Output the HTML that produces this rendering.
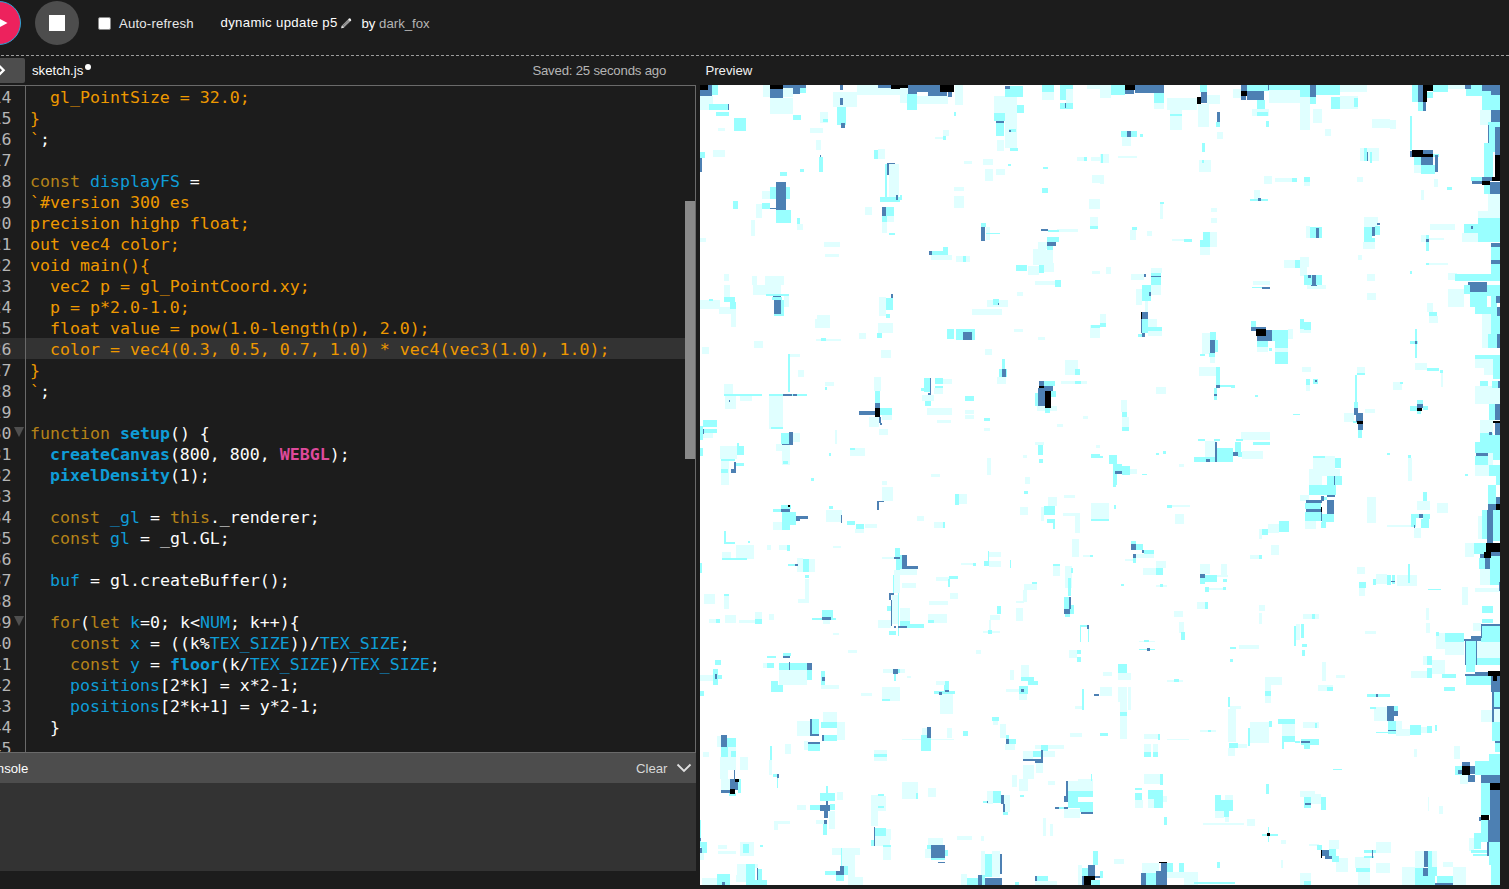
<!DOCTYPE html>
<html><head><meta charset="utf-8"><title>p5.js Web Editor</title>
<style>
*{box-sizing:border-box;margin:0;padding:0}
html,body{width:1509px;height:889px;overflow:hidden;background:#1c1c1c;color:#fdfdfd;font-family:"Liberation Sans",sans-serif}
.abs{position:absolute}
#play{left:-23px;top:1px;width:44px;height:44px;border-radius:50%;background:#ed225d;border:1px solid #2ea3d6}
#stop{left:35px;top:1px;width:44px;height:44px;border-radius:50%;background:#4d4d4d}
#stop i{position:absolute;left:14px;top:14px;width:16px;height:16px;background:#fff}
#chk{left:98px;top:17px;width:13px;height:13px;background:#fff;border:1px solid #8a8a8a;border-radius:2px}
.ui{font-size:13.2px;white-space:nowrap;line-height:16px}
#dash{left:0;top:55px;width:1509px;height:1px;background:repeating-linear-gradient(90deg,transparent 0,transparent 1px,#9c9c9c 1px,#9c9c9c 4px,transparent 4px,transparent 5px)}
#toggle{left:0;top:58px;width:25px;height:25px;background:#4d4d4d;border-radius:0 2px 2px 0}
#edtop{left:0;top:85px;width:696px;height:1px;background:#6a6a6a}
#edright{left:695px;top:85px;width:1px;height:668px;background:#6a6a6a}
#gutline{left:25px;top:86px;width:1px;height:666px;background:#6a6a6a}
#thumb{left:685px;top:201px;width:10px;height:258px;background:#898989}
#conhead{left:0;top:752px;width:696px;height:31px;background:#4d4d4d;border-top:1px solid #6a6a6a}
#conbody{left:0;top:783px;width:696px;height:88px;background:#333}
#active{left:26px;top:338px;width:659px;height:21px;background:#333}
#activeg{left:0;top:338px;width:25px;height:21px;background:#2c2c2c}
#code{left:0;top:86px;width:685px;height:666px;overflow:hidden}
.ln{position:absolute;left:0;width:685px;height:21px;line-height:21px;font-family:"DejaVu Sans Mono","Liberation Mono",monospace;font-size:16.6px;white-space:pre;color:#fdfdfd}
.ln b{font-weight:bold}
.n{position:absolute;right:673.5px;top:1px;color:#b5b5b5}
.c{position:absolute;left:30px;top:1px}
.o{color:#ee9900}.k{color:#b58318}.d{color:#0f9dd7}.f{color:#0f9dd7;font-weight:bold}.p{color:#de4a9b;font-weight:bold}
.fold{position:absolute;left:14px;top:5px;width:0;height:0;border-left:5px solid transparent;border-right:5px solid transparent;border-top:10px solid #4f4f4f;font-size:0;overflow:hidden}
#canvas{left:700px;top:85px;width:800px;height:800px;background:#fff;overflow:hidden}
</style></head><body>
<div class="abs" id="play"></div>
<svg class="abs" style="left:0;top:15px" width="10" height="16"><path d="M-6.5 0.5 L7.5 8 L-6.5 15.5Z" fill="#fff"/></svg>
<div class="abs" id="stop"><i></i></div>
<div class="abs" id="chk"></div>
<div class="abs ui" id="t-auto" style="left:119px;top:16px;letter-spacing:0.18px;color:#e8e8e8">Auto-refresh</div>
<div class="abs ui" id="t-name" style="left:220.5px;top:14.5px;letter-spacing:0.34px;color:#fdfdfd">dynamic update p5</div>
<svg class="abs" style="left:340px;top:16px" width="14" height="14" viewBox="0 0 14 14"><g transform="translate(1.3,12.3) rotate(-45)"><path d="M0 0 L2.2 -1.5 L11 -1.5 L11 1.5 L2.2 1.5Z" fill="#a4a4a4"/><path d="M0 0 L2.2 -1.5 L2.2 1.5Z" fill="#e6e6e6"/><path d="M11 -1.5 L12.6 -1.5 Q14.1 0 12.6 1.5 L11 1.5Z" fill="#f2f2f2"/><path d="M3.5 -1.5V1.5M5 -1.5V1.5M6.5 -1.5V1.5M8 -1.5V1.5M9.5 -1.5V1.5" stroke="#5a5a5a" stroke-width="0.5"/></g></svg>
<div class="abs ui" id="t-by" style="left:361.5px;top:16px;color:#fdfdfd">by <span style="color:#b5b5b5">dark_fox</span></div>
<div class="abs" id="dash"></div>
<div class="abs" id="toggle"></div>
<svg class="abs" style="left:0;top:60px" width="10" height="20"><path d="M-2 4.5 L3.65 10.2 L-2 15.9" fill="none" stroke="#fff" stroke-width="2.3"/></svg>
<div class="abs ui" id="t-sketch" style="left:32px;top:63px;color:#fdfdfd">sketch.js</div>
<div class="abs" style="left:85px;top:64px;width:6px;height:6px;border-radius:50%;background:#fdfdfd"></div>
<div class="abs ui" id="t-saved" style="left:532.4px;top:63px;letter-spacing:-0.2px;color:#b5b5b5">Saved: 25 seconds ago</div>
<div class="abs ui" id="t-prev" style="left:705.4px;top:63px;color:#f0f0f0">Preview</div>
<div class="abs" id="edtop"></div>
<div class="abs" id="activeg"></div>
<div class="abs" id="active"></div>
<div class="abs" id="code">
<!--CODESTART-->
<div class="ln" style="top:0px"><span class="n">14</span><span class="c"><span class="o">  gl_PointSize = 32.0;</span></span></div>
<div class="ln" style="top:21px"><span class="n">15</span><span class="c"><span class="o">}</span></span></div>
<div class="ln" style="top:42px"><span class="n">16</span><span class="c"><span class="o">`</span>;</span></div>
<div class="ln" style="top:63px"><span class="n">17</span><span class="c"></span></div>
<div class="ln" style="top:84px"><span class="n">18</span><span class="c"><span class="k">const</span> <span class="d">displayFS</span> =</span></div>
<div class="ln" style="top:105px"><span class="n">19</span><span class="c"><span class="o">`#version 300 es</span></span></div>
<div class="ln" style="top:126px"><span class="n">20</span><span class="c"><span class="o">precision highp float;</span></span></div>
<div class="ln" style="top:147px"><span class="n">21</span><span class="c"><span class="o">out vec4 color;</span></span></div>
<div class="ln" style="top:168px"><span class="n">22</span><span class="c"><span class="o">void main(){</span></span></div>
<div class="ln" style="top:189px"><span class="n">23</span><span class="c"><span class="o">  vec2 p = gl_PointCoord.xy;</span></span></div>
<div class="ln" style="top:210px"><span class="n">24</span><span class="c"><span class="o">  p = p*2.0-1.0;</span></span></div>
<div class="ln" style="top:231px"><span class="n">25</span><span class="c"><span class="o">  float value = pow(1.0-length(p), 2.0);</span></span></div>
<div class="ln" style="top:252px"><span class="n">26</span><span class="c"><span class="o">  color = vec4(0.3, 0.5, 0.7, 1.0) * vec4(vec3(1.0), 1.0);</span></span></div>
<div class="ln" style="top:273px"><span class="n">27</span><span class="c"><span class="o">}</span></span></div>
<div class="ln" style="top:294px"><span class="n">28</span><span class="c"><span class="o">`</span>;</span></div>
<div class="ln" style="top:315px"><span class="n">29</span><span class="c"></span></div>
<div class="ln" style="top:336px"><span class="n">30</span><span class="fold"></span><span class="c"><span class="k">function</span> <span class="f">setup</span>() {</span></div>
<div class="ln" style="top:357px"><span class="n">31</span><span class="c">  <span class="f">createCanvas</span>(800, 800, <span class="p">WEBGL</span>);</span></div>
<div class="ln" style="top:378px"><span class="n">32</span><span class="c">  <span class="f">pixelDensity</span>(1);</span></div>
<div class="ln" style="top:399px"><span class="n">33</span><span class="c"></span></div>
<div class="ln" style="top:420px"><span class="n">34</span><span class="c">  <span class="k">const</span> <span class="d">_gl</span> = <span class="k">this</span>._renderer;</span></div>
<div class="ln" style="top:441px"><span class="n">35</span><span class="c">  <span class="k">const</span> <span class="d">gl</span> = _gl.GL;</span></div>
<div class="ln" style="top:462px"><span class="n">36</span><span class="c"></span></div>
<div class="ln" style="top:483px"><span class="n">37</span><span class="c">  <span class="d">buf</span> = gl.createBuffer();</span></div>
<div class="ln" style="top:504px"><span class="n">38</span><span class="c"></span></div>
<div class="ln" style="top:525px"><span class="n">39</span><span class="fold"></span><span class="c">  <span class="k">for</span>(<span class="k">let</span> <span class="d">k</span>=0; k&lt;<span class="d">NUM</span>; k++){</span></div>
<div class="ln" style="top:546px"><span class="n">40</span><span class="c">    <span class="k">const</span> <span class="d">x</span> = ((k%<span class="d">TEX_SIZE</span>))/<span class="d">TEX_SIZE</span>;</span></div>
<div class="ln" style="top:567px"><span class="n">41</span><span class="c">    <span class="k">const</span> <span class="d">y</span> = <span class="f">floor</span>(k/<span class="d">TEX_SIZE</span>)/<span class="d">TEX_SIZE</span>;</span></div>
<div class="ln" style="top:588px"><span class="n">42</span><span class="c">    <span class="d">positions</span>[2*k] = x*2-1;</span></div>
<div class="ln" style="top:609px"><span class="n">43</span><span class="c">    <span class="d">positions</span>[2*k+1] = y*2-1;</span></div>
<div class="ln" style="top:630px"><span class="n">44</span><span class="c">  }</span></div>
<div class="ln" style="top:651px"><span class="n">45</span><span class="c"></span></div>
<!--CODEEND-->
</div>
<div class="abs" id="gutline"></div>
<div class="abs" id="edright"></div>
<div class="abs" id="thumb"></div>
<div class="abs" id="conhead"></div>
<div class="abs ui" id="t-con" style="left:-20px;top:761px;color:#fdfdfd">Console</div>
<div class="abs ui" id="t-clear" style="left:636px;top:761px;color:#d8d8d8">Clear</div>
<svg class="abs" style="left:676px;top:762px" width="16" height="12"><path d="M1.5 2.5 L8 9 L14.5 2.5" fill="none" stroke="#e0e0e0" stroke-width="1.8"/></svg>
<div class="abs" id="conbody"></div>
<div class="abs" id="canvas">
<svg width="800" height="800" viewBox="0 0 800 800" shape-rendering="crispEdges" style="display:block;filter:blur(0.6px)">
<!--BS-->
<path fill="#e0ffff" d="M0 11h13v14h-13zM63 0h7v12h-7zM83 3h10v9h-10zM70 13h23v16h-23zM133 7h24v15h-24zM157 0h43v10h-43zM18 43h7v3h-7zM110 43h13v5h-13zM120 27h8v11h-8zM13 65h12v7h-12zM116 55h5v10h-5zM62 106h8v8h-8zM56 119h6v14h-6zM51 135h4v16h-4zM97 139h6v6h-6zM178 64h7v10h-7zM189 79h10v33h-10zM187 131h7v6h-7zM165 122h7v8h-7zM182 137h5v11h-5zM0 153h6v4h-6zM124 157h16v5h-16zM125 169h14v3h-14zM24 189h5v7h-5zM52 191h5v9h-5zM65 191h19v9h-19zM24 200h6v12h-6zM53 200h28v10h-28zM84 211h5v11h-5zM0 215h20v9h-20zM19 222h17v7h-17zM31 227h5v15h-5zM179 212h7v19h-7zM117 230h13v13h-13zM115 234h2v9h-2zM116 254h25v2h-25zM54 256h9v7h-9zM2 262h7v7h-7zM178 238h15v10h-15zM181 265h10v8h-10zM159 248h7v6h-7zM90 269h10v3h-10zM98 285h6v7h-6zM125 297h9v4h-9zM24 299h9v10h-9zM40 311h12v5h-12zM25 311h11v13h-11zM69 311h14v33h-14zM174 292h7v14h-7zM182 330h10v5h-10zM169 332h10v10h-10zM179 344h9v6h-9zM0 348h13v5h-13zM93 348h7v9h-7zM76 359h14v7h-14zM82 366h8v14h-8zM20 361h17v13h-17zM21 376h8v24h-8zM150 363h15v8h-15zM135 345h2v14h-2zM182 396h5v4h-5zM182 402h11v14h-11zM73 437h9v8h-9zM126 425h16v12h-16zM155 444h9v4h-9zM165 439h12v4h-12zM22 467h9v7h-9zM36 460h18v14h-18zM79 460h8v5h-8zM67 460h4v5h-4zM133 461h8v2h-8zM109 474h6v13h-6zM97 473h6v14h-6zM182 472h12v2h-12zM105 494h4v24h-4zM98 514h11v4h-11zM4 509h11v10h-11zM24 510h5v14h-5zM9 534h7v4h-7zM25 530h11v8h-11zM39 535h16v3h-16zM55 527h7v7h-7zM69 529h5v6h-5zM123 535h7v4h-7zM194 485h6v23h-6zM178 535h13v8h-13zM192 510h6v29h-6zM133 548h6v2h-6zM148 565h9v3h-9zM79 585h28v15h-28zM63 578h4v5h-4zM0 590h13v6h-13zM183 584h10v4h-10zM121 600h18v4h-18zM161 608h11v3h-11zM182 602h18v14h-18zM17 651h4v11h-4zM28 662h8v23h-8zM20 672h8v22h-8zM3 667h6v5h-6zM21 694h9v11h-9zM40 672h8v13h-8zM97 636h13v15h-13zM137 637h8v18h-8zM123 627h14v10h-14zM104 656h4v9h-4zM85 659h6v10h-6zM69 675h3v15h-3zM174 665h13v11h-13zM97 720h9v5h-9zM116 735h8v4h-8zM129 726h6v18h-6zM137 707h6v8h-6zM178 711h8v15h-8zM171 710h7v31h-7zM186 744h5v11h-5zM175 751h15v10h-15zM183 762h8v13h-8zM74 736h16v3h-16zM74 739h4v6h-4zM0 768h4v7h-4zM40 757h14v14h-14zM18 760h9v4h-9zM18 766h18v3h-18zM132 763h28v7h-28zM142 770h13v17h-13zM148 787h7v13h-7zM155 792h8v8h-8zM37 779h9v11h-9zM55 779h3v4h-3zM36 790h10v7h-10zM2 793h15v7h-15zM200 3h8v15h-8zM217 11h31v8h-31zM255 0h8v20h-8zM294 11h11v18h-11zM305 12h12v51h-12zM297 55h7v11h-7zM342 7h12v8h-12zM366 4h7v14h-7zM387 0h13v4h-13zM243 45h6v6h-6zM235 52h8v2h-8zM283 74h10v6h-10zM285 84h8v12h-8zM296 84h9v6h-9zM264 76h8v3h-8zM377 72h7v4h-7zM391 72h9v4h-9zM392 90h8v8h-8zM389 114h11v10h-11zM390 132h8v9h-8zM254 102h10v4h-10zM254 111h10v4h-10zM254 115h10v8h-10zM286 142h4v13h-4zM357 144h21v3h-21zM338 157h9v7h-9zM346 165h7v15h-7zM333 164h13v16h-13zM344 178h10v9h-10zM328 181h11v9h-11zM231 170h21v5h-21zM256 171h14v6h-14zM335 196h20v4h-20zM392 186h8v3h-8zM317 207h6v4h-6zM287 215h21v7h-21zM272 224h30v6h-30zM314 244h9v3h-9zM338 252h7v3h-7zM390 240h10v13h-10zM285 264h7v6h-7zM297 292h9v7h-9zM365 275h13v15h-13zM361 296h26v3h-26zM337 321h20v5h-20zM243 294h9v5h-9zM234 303h9v6h-9zM222 310h12v6h-12zM227 323h25v7h-25zM237 335h14v3h-14zM265 325h9v4h-9zM265 330h9v4h-9zM284 343h6v3h-6zM357 339h6v3h-6zM383 331h5v3h-5zM335 357h9v3h-9zM396 360h4v3h-4zM323 370h4v3h-4zM287 373h4v17h-4zM231 389h9v3h-9zM325 392h5v7h-5zM259 409h8v10h-8zM217 431h7v5h-7zM234 437h11v6h-11zM320 422h8v8h-8zM341 422h3v14h-3zM348 412h9v9h-9zM364 410h11v3h-11zM363 428h17v3h-17zM375 431h5v17h-5zM372 454h7v18h-7zM391 418h9v16h-9zM383 470h7v2h-7zM200 484h17v6h-17zM202 498h14v5h-14zM289 467h12v5h-12zM289 476h12v6h-12zM261 478h12v2h-12zM236 492h13v4h-13zM250 508h8v6h-8zM229 516h19v4h-19zM353 479h7v12h-7zM365 481h7v22h-7zM324 499h13v6h-13zM323 505h4v12h-4zM316 516h8v2h-8zM316 523h7v13h-7zM290 530h10v5h-10zM283 546h17v2h-17zM289 535h2v10h-2zM369 565h8v8h-8zM200 523h10v13h-10zM228 529h19v6h-19zM234 535h13v3h-13zM276 565h5v4h-5zM321 580h8v12h-8zM310 585h4v10h-4zM236 596h9v4h-9zM200 584h5v4h-5zM207 591h4v2h-4zM240 609h13v20h-13zM306 604h22v3h-22zM319 609h8v6h-8zM375 621h8v3h-8zM293 636h5v4h-5zM300 639h6v14h-6zM222 643h5v7h-5zM202 654h52v1h-52zM247 643h5v10h-5zM305 659h10v6h-10zM323 666h10v8h-10zM343 666h12v6h-12zM335 660h29v4h-29zM323 680h11v14h-11zM336 678h7v10h-7zM312 690h5v12h-5zM319 694h9v12h-9zM370 648h12v4h-12zM304 710h6v17h-6zM287 706h6v13h-6zM202 697h16v17h-16zM228 703h8v9h-8zM368 696h10v10h-10zM378 694h15v12h-15zM364 724h16v9h-16zM348 696h7v4h-7zM343 733h3v18h-3zM350 739h3v12h-3zM225 764h6v9h-6zM228 753h15v7h-15zM257 751h15v4h-15zM281 751h3v5h-3zM292 766h8v26h-8zM281 766h4v26h-4zM261 789h6v11h-6zM335 796h22v4h-22zM378 780h4v20h-4zM400 0h11v13h-11zM454 18h10v6h-10zM467 13h30v12h-30zM470 25h12v20h-12zM507 10h13v9h-13zM498 19h11v23h-11zM517 47h6v7h-6zM569 5h31v13h-31zM552 24h17v7h-17zM533 4h8v9h-8zM422 52h9v9h-9zM499 75h12v12h-12zM400 69h9v9h-9zM400 90h4v9h-4zM418 71h19v2h-19zM575 93h17v4h-17zM564 91h8v8h-8zM554 105h6v9h-6zM460 119h3v15h-3zM511 123h6v4h-6zM511 133h6v5h-6zM430 145h6v10h-6zM447 146h5v5h-5zM472 154h12v2h-12zM510 147h7v15h-7zM500 162h10v8h-10zM584 175h11v8h-11zM431 189h13v6h-13zM451 183h11v5h-11zM406 182h5v7h-5zM553 196h17v4h-17zM451 200h10v10h-10zM436 204h6v16h-6zM448 234h9v8h-9zM448 246h14v5h-14zM445 216h3v11h-3zM400 229h6v9h-6zM588 244h5v10h-5zM575 263h13v4h-13zM557 262h11v5h-11zM502 248h8v21h-8zM510 272h5v6h-5zM499 282h17v9h-17zM456 302h10v7h-10zM421 315h6v12h-6zM422 332h7v10h-7zM541 347h29v8h-29zM505 356h11v16h-11zM542 366h21v8h-21zM430 384h7v5h-7zM479 379h5v3h-5zM400 418h9v16h-9zM472 420h18v2h-18zM475 429h9v10h-9zM436 469h18v4h-18zM425 474h11v2h-11zM443 483h13v7h-13zM456 476h10v7h-10zM456 500h11v2h-11zM517 490h11v2h-11zM521 479h6v11h-6zM500 479h10v10h-10zM509 503h14v2h-14zM497 517h8v7h-8zM474 526h9v6h-9zM479 537h5v11h-5zM568 439h11v9h-11zM559 444h3v10h-3zM571 460h8v10h-8zM550 470h9v4h-9zM439 556h16v1h-16zM418 588h13v7h-13zM403 587h9v4h-9zM539 560h20v4h-20zM596 539h4v16h-4zM559 520h6v6h-6zM559 528h3v11h-3zM467 595h16v2h-16zM565 592h17v8h-17zM400 602h12v9h-12zM418 602h9v15h-9zM420 617h7v37h-7zM428 602h3v23h-3zM444 649h14v5h-14zM444 659h7v8h-7zM453 659h5v8h-5zM467 654h22v1h-22zM500 645h16v2h-16zM530 621h11v3h-11zM528 624h8v33h-8zM538 659h9v4h-9zM528 663h7v8h-7zM550 637h19v21h-19zM582 639h13v12h-13zM565 611h6v7h-6zM565 600h6v6h-6zM444 689h16v10h-16zM435 715h8v8h-8zM448 714h6v9h-6zM463 711h4v6h-4zM525 710h8v5h-8zM515 726h9v7h-9zM525 732h4v5h-4zM503 738h41v2h-41zM547 734h8v7h-8zM581 755h5v4h-5zM442 778h17v10h-17zM467 787h17v6h-17zM484 787h14v13h-14zM414 774h10v5h-10zM581 775h2v8h-2zM640 11h18v13h-18zM600 12h10v33h-10zM613 24h9v14h-9zM625 44h6v7h-6zM748 0h17v4h-17zM780 25h11v15h-11zM788 109h12v24h-12zM778 126h22v7h-22zM762 148h16v9h-16zM748 188h9v7h-9zM714 80h7v8h-7zM690 35h6v9h-6zM672 34h18v9h-18zM660 63h19v13h-19zM604 97h6v4h-6zM657 92h6v5h-6zM721 105h3v10h-3zM734 94h4v8h-4zM606 141h4v12h-4zM664 132h14v10h-14zM663 157h12v7h-12zM721 150h5v7h-5zM729 153h15v2h-15zM730 139h25v6h-25zM729 178h19v2h-19zM600 172h9v10h-9zM600 182h7v9h-7zM658 170h4v5h-4zM667 189h8v7h-8zM640 0h27v7h-27zM748 204h16v18h-16zM782 229h9v34h-9zM775 274h18v9h-18zM775 301h25v18h-25zM780 335h13v13h-13zM788 368h5v12h-5zM775 380h14v11h-14zM607 200h19v4h-19zM600 244h11v4h-11zM667 208h9v7h-9zM727 218h6v9h-6zM729 231h9v7h-9zM715 278h12v7h-12zM741 288h2v14h-2zM657 282h8v6h-8zM602 282h9v5h-9zM606 300h4v6h-4zM693 297h9v8h-9zM644 328h10v9h-10zM665 324h10v4h-10zM784 283h9v7h-9zM708 373h4v23h-4zM613 371h22v13h-22zM622 384h18v7h-18zM609 384h13v16h-13zM609 400h13v4h-13zM605 436h11v8h-11zM600 410h9v6h-9zM717 416h13v9h-13zM714 443h7v10h-7zM687 440h24v2h-24zM667 412h9v26h-9zM737 418h11v10h-11zM778 431h4v23h-4zM765 458h9v14h-9zM780 484h10v16h-10zM775 503h25v4h-25zM676 489h11v10h-11zM697 490h20v11h-20zM659 503h6v8h-6zM657 482h8v7h-8zM762 502h6v18h-6zM773 538h8v8h-8zM777 554h23v19h-23zM736 548h9v16h-9zM745 557h19v13h-19zM723 571h4v9h-4zM732 575h13v14h-13zM711 586h16v7h-16zM726 523h3v12h-3zM726 538h4v10h-4zM603 529h16v5h-16zM665 546h11v3h-11zM636 590h9v3h-9zM622 577h4v19h-4zM618 600h15v6h-15zM674 622h13v14h-13zM696 636h6v15h-6zM702 644h8v7h-8zM721 642h6v6h-6zM603 637h16v6h-16zM714 664h3v8h-3zM754 661h6v13h-6zM760 690h8v9h-8zM790 762h10v13h-10zM769 753h5v13h-5zM794 624h6v13h-6zM781 625h11v12h-11zM600 706h15v6h-15zM611 709h10v10h-10zM728 712h1v14h-1zM739 721h4v8h-4zM629 755h10v9h-10zM609 759h10v2h-10zM636 773h12v14h-12zM676 757h15v11h-15zM655 772h15v11h-15zM658 787h12v13h-12zM676 778h14v10h-14zM715 766h9v17h-9zM732 766h5v16h-5zM702 782h13v18h-13zM743 777h10v5h-10zM753 782h13v18h-13zM600 788h11v12h-11z"/>
<path fill="#99ffff" d="M12 0h6v10h-6zM100 0h6v8h-6zM137 22h9v18h-9zM9 19h19v6h-19zM16 27h13v4h-13zM34 33h12v13h-12zM93 30h8v5h-8zM123 34h5v3h-5zM0 67h5v6h-5zM119 72h4v15h-4zM80 87h7v4h-7zM100 84h4v3h-4zM70 102h6v12h-6zM86 102h4v12h-4zM76 125h15v13h-15zM62 118h8v6h-8zM33 116h5v8h-5zM97 133h3v6h-3zM174 65h4v9h-4zM185 79h2v33h-2zM180 112h20v5h-20zM186 122h8v9h-8zM182 131h5v6h-5zM189 148h6v2h-6zM66 209h23v2h-23zM72 212h10v3h-10zM81 215h3v16h-3zM74 229h7v2h-7zM24 212h11v5h-11zM30 217h6v7h-6zM9 214h4v2h-4zM186 213h7v12h-7zM186 229h4v4h-4zM121 253h5v3h-5zM177 248h5v5h-5zM88 269h2v38h-2zM125 302h2v3h-2zM24 309h38v2h-38zM69 309h38v2h-38zM71 342h12v2h-12zM175 306h5v12h-5zM180 323h12v7h-12zM3 335h14v7h-14zM3 344h14v4h-14zM0 341h3v14h-3zM0 363h3v8h-3zM81 348h8v11h-8zM83 376h5v3h-5zM37 361h7v9h-7zM37 358h2v4h-2zM21 374h14v2h-14zM36 378h8v3h-8zM21 384h7v4h-7zM150 363h5v2h-5zM129 368h2v3h-2zM111 393h3v3h-3zM81 420h10v4h-10zM73 424h8v3h-8zM82 427h8v18h-8zM90 427h6v13h-6zM129 421h4v3h-4zM147 436h8v4h-8zM156 439h8v5h-8zM24 446h2v12h-2zM24 457h11v2h-11zM48 456h2v2h-2zM22 473h25v2h-25zM87 460h3v6h-3zM0 478h2v10h-2zM88 479h9v2h-9zM103 474h6v13h-6zM195 463h5v9h-5zM196 474h4v11h-4zM105 490h4v3h-4zM24 509h5v2h-5zM16 534h4v4h-4zM55 534h7v5h-7zM122 525h11v8h-11zM131 533h5v2h-5zM112 533h10v2h-10zM193 490h1v18h-1zM187 521h4v5h-4zM198 508h1v43h-1zM189 546h7v4h-7zM67 571h9v2h-9zM83 568h8v3h-8zM67 578h7v5h-7zM79 578h28v7h-28zM107 585h5v10h-5zM71 596h7v4h-7zM15 575h6v5h-6zM13 584h5v16h-5zM18 590h4v4h-4zM121 586h4v14h-4zM198 584h2v4h-2zM194 589h2v7h-2zM0 606h4v5h-4zM71 600h12v7h-12zM182 614h8v2h-8zM27 653h9v9h-9zM21 662h7v10h-7zM31 666h5v6h-5zM38 694h3v14h-3zM29 708h7v3h-7zM112 634h7v15h-7zM121 637h16v6h-16zM124 650h13v6h-13zM108 659h12v7h-12zM70 661h2v14h-2zM73 689h6v3h-6zM77 693h1v10h-1zM174 669h13v3h-13zM120 708h15v8h-15zM110 720h10v5h-10zM130 719h5v6h-5zM123 739h4v11h-4zM126 701h2v7h-2zM178 709h6v2h-6zM178 721h6v2h-6zM175 743h11v8h-11zM171 755h3v6h-3zM183 760h8v2h-8zM0 735h1v27h-1zM1 757h6v11h-6zM43 759h6v9h-6zM60 760h3v2h-3zM144 781h4v9h-4zM125 786h11v4h-11zM136 790h8v6h-8zM141 763h1v18h-1zM46 779h9v16h-9zM58 784h4v11h-4zM46 795h21v5h-21zM17 789h13v11h-13zM207 9h10v16h-10zM254 27h2v4h-2zM305 4h5v8h-5zM310 1h13v11h-13zM317 20h7v8h-7zM294 28h11v8h-11zM296 38h8v13h-8zM309 44h7v3h-7zM310 63h8v3h-8zM342 0h12v7h-12zM360 0h13v4h-13zM360 4h6v11h-6zM360 18h13v6h-13zM243 51h3v4h-3zM308 79h3v2h-3zM343 82h5v2h-5zM342 103h6v5h-6zM384 72h3v4h-3zM390 141h8v3h-8zM200 110h2v5h-2zM281 138h5v4h-5zM286 148h14v1h-14zM348 145h11v2h-11zM347 152h12v5h-12zM347 161h6v4h-6zM339 180h5v8h-5zM316 180h11v6h-11zM232 166h16v4h-16zM243 162h5v4h-5zM263 171h3v6h-3zM355 195h6v5h-6zM355 200h6v2h-6zM293 214h6v6h-6zM247 244h7v10h-7zM256 244h19v11h-19zM391 240h9v3h-9zM299 284h8v8h-8zM302 274h3v10h-3zM375 284h5v6h-5zM375 296h6v3h-6zM344 296h11v5h-11zM335 308h3v13h-3zM351 306h5v6h-5zM345 323h5v5h-5zM224 293h6v14h-6zM221 303h8v3h-8zM235 293h8v6h-8zM235 301h8v2h-8zM225 316h6v5h-6zM265 311h9v5h-9zM284 333h6v3h-6zM338 360h5v10h-5zM339 374h4v4h-4zM391 369h9v4h-9zM255 409h4v11h-4zM324 406h4v3h-4zM243 437h2v6h-2zM344 421h11v9h-11zM347 434h8v4h-8zM353 438h2v6h-2zM391 434h9v2h-9zM390 470h3v2h-3zM200 470h2v14h-2zM284 476h5v5h-5zM288 466h1v10h-1zM273 478h3v3h-3zM310 475h1v8h-1zM249 491h9v3h-9zM248 494h2v8h-2zM353 479h7v2h-7zM368 493h3v18h-3zM371 483h2v5h-2zM332 497h5v2h-5zM297 521h4v8h-4zM288 545h4v4h-4zM364 512h5v12h-5zM370 520h4v9h-4zM365 529h5v3h-5zM380 540h7v2h-7zM380 542h1v15h-1zM388 544h1v13h-1zM377 565h4v4h-4zM377 572h4v5h-4zM200 536h10v5h-10zM207 539h17v4h-17zM228 535h6v3h-6zM321 592h13v4h-13zM328 596h10v4h-10zM245 596h4v4h-4zM244 600h5v7h-5zM234 606h21v3h-21zM319 601h9v8h-9zM382 604h2v21h-2zM292 632h7v4h-7zM221 652h10v14h-10zM221 650h6v2h-6zM263 646h5v5h-5zM306 650h3v4h-3zM309 654h7v5h-7zM333 666h8v6h-8zM341 660h7v6h-7zM293 706h8v3h-8zM293 709h8v9h-8zM303 727h5v3h-5zM283 716h5v2h-5zM320 710h4v2h-4zM216 708h2v6h-2zM368 706h10v11h-10zM378 706h15v6h-15zM368 717h25v6h-25zM359 722h5v2h-5zM380 723h13v4h-13zM391 689h1v7h-1zM227 760h4v4h-4zM245 765h3v6h-3zM231 773h14v2h-14zM285 769h7v23h-7zM267 793h11v7h-11zM282 790h3v10h-3zM337 791h11v5h-11zM315 797h4v3h-4zM391 795h9v5h-9zM382 783h6v8h-6zM393 766h5v14h-5zM411 0h14v10h-14zM454 8h10v10h-10zM470 29h12v2h-12zM500 0h7v7h-7zM516 37h4v5h-4zM547 0h22v6h-22zM569 0h31v5h-31zM557 15h8v9h-8zM557 27h11v4h-11zM566 36h3v6h-3zM421 46h16v6h-16zM440 49h3v3h-3zM502 58h3v9h-3zM502 75h2v3h-2zM401 69h2v9h-2zM592 93h5v4h-5zM550 114h18v2h-18zM460 117h4v2h-4zM432 142h5v3h-5zM484 154h8v3h-8zM503 147h7v8h-7zM500 155h10v7h-10zM595 175h5v8h-5zM451 188h10v12h-10zM442 200h9v16h-9zM442 234h6v14h-6zM438 249h4v3h-4zM448 242h14v4h-14zM400 238h6v4h-6zM552 202h10v1h-10zM551 236h5v6h-5zM557 256h11v6h-11zM572 245h16v11h-16zM575 256h13v7h-13zM575 267h13v12h-13zM569 263h3v3h-3zM510 247h6v8h-6zM515 255h3v12h-3zM509 268h6v4h-6zM500 269h5v2h-5zM516 282h4v18h-4zM520 300h12v2h-12zM531 300h4v3h-4zM514 303h3v12h-3zM555 310h3v2h-3zM422 327h5v5h-5zM422 342h7v4h-7zM593 329h7v1h-7zM498 354h7v2h-7zM514 354h6v2h-6zM536 354h7v2h-7zM553 357h17v3h-17zM516 363h17v9h-17zM535 357h6v10h-6zM538 367h4v5h-4zM494 372h39v5h-39zM456 368h3v2h-3zM463 366h3v3h-3zM400 371h3v2h-3zM409 370h6v9h-6zM413 370h4v30h-4zM417 379h5v7h-5zM422 381h8v9h-8zM442 389h5v1h-5zM413 400h3v2h-3zM414 420h2v4h-2zM400 434h9v2h-9zM467 420h5v3h-5zM436 459h7v6h-7zM431 456h5v3h-5zM444 465h10v4h-10zM433 473h3v5h-3zM456 483h7v7h-7zM460 499h3v3h-3zM421 499h3v2h-3zM500 489h5v10h-5zM505 490h12v7h-12zM523 494h4v3h-4zM523 502h3v3h-3zM505 502h4v5h-4zM505 517h3v7h-3zM481 547h4v8h-4zM562 444h6v6h-6zM579 436h10v11h-10zM559 470h3v4h-3zM444 555h5v2h-5zM439 564h16v1h-16zM418 579h9v9h-9zM530 562h6v2h-6zM530 574h3v3h-3zM594 541h2v20h-2zM474 594h5v3h-5zM420 627h7v4h-7zM400 648h8v3h-8zM458 649h2v6h-2zM444 667h7v5h-7zM453 667h5v5h-5zM508 645h3v2h-3zM528 612h2v10h-2zM529 658h9v5h-9zM548 643h2v18h-2zM569 636h3v6h-3zM578 634h17v5h-17zM582 651h13v6h-13zM582 657h2v7h-2zM595 656h5v2h-5zM565 606h6v5h-6zM460 689h3v11h-3zM435 703h7v2h-7zM435 708h7v7h-7zM448 705h15v9h-15zM454 714h9v9h-9zM464 732h3v8h-3zM515 710h6v5h-6zM515 715h18v11h-18zM524 726h5v6h-5zM562 749h16v2h-16zM568 742h1v15h-1zM566 699h3v10h-3zM446 788h10v12h-10zM467 778h6v9h-6zM479 778h5v9h-5zM494 797h41v2h-41zM517 777h3v6h-3zM400 786h3v7h-3zM600 0h10v12h-10zM616 0h24v10h-24zM610 12h6v7h-6zM631 12h9v12h-9zM654 13h4v9h-4zM712 0h6v17h-6zM718 17h5v9h-5zM733 0h15v7h-15zM727 7h6v6h-6zM771 0h11v4h-11zM766 4h16v7h-16zM782 6h9v19h-9zM791 10h9v15h-9zM788 37h12v5h-12zM789 42h6v16h-6zM784 58h11v9h-11zM784 67h9v25h-9zM771 92h11v4h-11zM784 100h6v9h-6zM778 133h22v24h-22zM791 162h9v13h-9zM791 179h9v12h-9zM764 139h14v9h-14zM755 189h45v7h-45zM733 69h6v3h-6zM714 72h7v8h-7zM721 80h14v9h-14zM710 31h2v34h-2zM664 63h3v13h-3zM670 67h2v11h-2zM604 92h6v5h-6zM747 102h5v3h-5zM610 142h12v11h-12zM664 142h8v11h-8zM675 141h5v9h-5zM664 153h11v4h-11zM726 150h3v16h-3zM726 178h3v2h-3zM710 186h2v3h-2zM604 190h18v10h-18zM764 200h6v9h-6zM787 200h13v11h-13zM770 207h17v15h-17zM775 222h16v7h-16zM791 211h6v20h-6zM791 231h9v18h-9zM788 249h9v14h-9zM775 270h25v4h-25zM793 274h7v20h-7zM780 296h8v5h-8zM792 296h6v7h-6zM789 319h6v16h-6zM780 348h13v9h-13zM793 350h7v25h-7zM775 357h18v11h-18zM775 371h13v9h-13zM789 380h11v11h-11zM796 391h4v9h-4zM600 234h4v10h-4zM604 237h7v8h-7zM729 227h8v4h-8zM710 256h8v3h-8zM715 244h2v29h-2zM727 283h12v3h-12zM740 285h3v3h-3zM657 288h8v2h-8zM655 290h2v27h-2zM606 294h4v6h-4zM613 294h5v5h-5zM700 297h3v2h-3zM654 317h4v6h-4zM653 336h4v2h-4zM658 345h4v8h-4zM717 315h6v4h-6zM710 321h7v5h-7zM723 321h5v4h-5zM717 326h4v3h-4zM687 368h3v2h-3zM708 370h3v3h-3zM635 373h6v10h-6zM613 371h12v2h-12zM627 391h15v9h-15zM765 389h3v2h-3zM609 400h27v10h-27zM605 418h16v6h-16zM605 427h16v9h-16zM622 429h12v8h-12zM621 437h5v6h-5zM622 412h5v3h-5zM723 407h4v9h-4zM711 429h8v4h-8zM723 429h7v5h-7zM711 433h5v9h-5zM721 434h8v9h-8zM788 400h8v19h-8zM791 425h9v31h-9zM782 425h6v29h-6zM774 458h12v11h-12zM779 473h6v11h-6zM790 471h10v19h-10zM790 490h10v10h-10zM687 490h4v10h-4zM692 490h3v9h-3zM673 494h3v6h-3zM708 479h2v19h-2zM659 497h7v6h-7zM728 504h13v1h-13zM782 521h11v7h-11zM782 534h11v4h-11zM781 539h19v18h-19zM766 556h10v24h-10zM777 573h23v7h-23zM766 580h9v7h-9zM766 591h25v9h-25zM745 548h19v9h-19zM736 547h3v4h-3zM727 571h5v9h-5zM727 583h5v10h-5zM742 589h14v4h-14zM612 529h3v5h-3zM601 539h3v14h-3zM602 559h5v3h-5zM602 565h3v6h-3zM627 602h6v4h-6zM744 602h11v4h-11zM667 609h23v3h-23zM694 621h4v5h-4zM688 636h8v9h-8zM688 646h8v3h-8zM670 622h6v2h-6zM710 640h11v10h-11zM727 641h5v7h-5zM735 640h2v6h-2zM676 647h12v1h-12zM615 638h2v5h-2zM601 654h18v6h-18zM604 660h6v4h-6zM755 681h7v9h-7zM775 676h25v14h-25zM781 698h9v32h-9zM781 735h7v22h-7zM789 757h11v23h-11zM774 748h7v16h-7zM773 769h16v2h-16zM794 607h6v15h-6zM792 637h8v19h-8zM795 658h5v9h-5zM789 669h11v7h-11zM604 712h7v11h-7zM621 712h5v13h-5zM633 684h9v1h-9zM617 760h5v5h-5zM629 764h7v7h-7zM632 771h7v6h-7zM664 765h12v3h-12zM664 771h10v2h-10zM656 783h14v4h-14zM715 783h8v17h-8zM728 766h4v16h-4zM723 791h12v9h-12zM728 782h9v9h-9zM737 791h16v7h-16zM771 765h18v3h-18zM791 780h9v20h-9zM604 796h7v4h-7z"/>
<path fill="#4d80b3" d="M0 5h8v6h-8zM8 0h4v11h-4zM70 4h13v9h-13zM83 0h23v3h-23zM93 3h7v6h-7zM140 0h3v5h-3zM140 13h3v7h-3zM141 38h4v5h-4zM178 0h13v3h-13zM28 19h1v6h-1zM0 73h2v14h-2zM120 70h1v2h-1zM76 97h10v28h-10zM70 123h6v1h-6zM187 78h8v1h-8zM187 79h2v11h-2zM196 110h2v5h-2zM182 122h4v9h-4zM73 211h8v1h-8zM74 215h7v14h-7zM191 209h2v4h-2zM29 315h1v2h-1zM83 309h9v2h-9zM93 309h4v2h-4zM175 318h5v5h-5zM159 326h16v4h-16zM179 332h2v6h-2zM180 338h2v2h-2zM3 344h1v5h-1zM89 347h4v13h-4zM82 359h8v1h-8zM34 377h2v7h-2zM31 384h5v4h-5zM177 416h7v1h-7zM177 417h2v8h-2zM81 424h9v3h-9zM96 431h4v5h-4zM100 431h8v3h-8zM141 430h1v8h-1zM95 479h3v2h-3zM194 472h6v2h-6zM122 532h9v3h-9zM189 508h5v2h-5zM189 510h2v5h-2zM191 515h1v26h-1zM194 541h2v2h-2zM198 541h2v2h-2zM83 571h7v2h-7zM107 578h5v7h-5zM89 577h1v8h-1zM15 589h2v5h-2zM122 592h3v4h-3zM193 584h5v5h-5zM21 650h6v12h-6zM34 685h1v9h-1zM30 694h8v11h-8zM21 705h9v3h-9zM110 634h2v17h-2zM112 649h7v2h-7zM122 650h2v6h-2zM108 657h12v2h-12zM77 689h2v4h-2zM120 720h10v6h-10zM126 716h2v4h-2zM124 726h4v7h-4zM124 735h3v4h-3zM174 742h1v19h-1zM0 753h1v3h-1zM0 763h2v5h-2zM140 781h4v5h-4zM136 786h8v4h-8zM57 783h1v12h-1zM22 797h3v3h-3zM208 0h32v7h-32zM228 7h19v4h-19zM248 7h4v5h-4zM208 7h9v2h-9zM305 1h5v3h-5zM296 36h8v2h-8zM309 45h2v2h-2zM365 18h1v5h-1zM281 142h4v14h-4zM341 144h7v2h-7zM347 157h9v4h-9zM229 166h3v4h-3zM298 218h1v2h-1zM263 247h9v8h-9zM302 284h4v8h-4zM339 296h5v6h-5zM344 301h9v5h-9zM338 303h7v18h-7zM230 293h1v15h-1zM228 308h3v2h-3zM202 470h5v14h-5zM207 481h11v3h-11zM369 512h2v12h-2zM364 524h6v5h-6zM387 540h2v4h-2zM200 541h7v2h-7zM245 605h4v2h-4zM239 607h3v3h-3zM321 604h3v3h-3zM394 609h5v2h-5zM227 642h4v8h-4zM227 650h4v3h-4zM306 654h3v5h-3zM341 665h2v9h-2zM323 674h12v2h-12zM335 674h8v4h-8zM301 710h3v9h-3zM303 719h2v8h-2zM287 716h1v2h-1zM366 696h2v15h-2zM364 711h4v6h-4zM355 722h4v2h-4zM364 722h4v2h-4zM381 727h12v2h-12zM231 760h14v13h-14zM238 777h7v1h-7zM300 769h2v20h-2zM278 790h4v10h-4zM285 793h17v7h-17zM335 791h2v5h-2zM388 780h7v11h-7zM395 791h5v2h-5zM382 791h3v9h-3zM435 0h29v8h-29zM425 5h9v4h-9zM501 7h6v11h-6zM517 27h3v10h-3zM547 6h17v9h-17zM541 0h6v6h-6zM541 11h5v4h-5zM568 0h1v5h-1zM427 46h4v6h-4zM558 113h3v3h-3zM444 189h2v3h-2zM451 191h10v1h-10zM449 207h2v4h-2zM441 227h7v7h-7zM441 234h1v14h-1zM442 248h3v4h-3zM562 202h8v2h-8zM551 242h5v4h-5zM556 242h10v2h-10zM566 245h6v11h-6zM557 251h9v5h-9zM510 255h5v13h-5zM516 300h4v3h-4zM514 309h3v2h-3zM515 357h2v20h-2zM533 367h5v4h-5zM506 374h4v3h-4zM415 386h7v3h-7zM431 459h5v6h-5zM442 465h2v3h-2zM433 469h3v4h-3zM500 489h5v4h-5zM447 563h3v3h-3zM441 788h5v12h-5zM456 786h5v14h-5zM461 778h6v22h-6zM610 0h6v12h-6zM718 0h5v17h-5zM723 17h3v9h-3zM765 0h6v4h-6zM782 0h18v6h-18zM791 6h9v4h-9zM791 25h9v12h-9zM795 42h5v28h-5zM788 40h1v18h-1zM797 70h3v4h-3zM782 92h11v4h-11zM772 96h10v3h-10zM790 97h10v12h-10zM791 158h9v4h-9zM791 175h9v4h-9zM771 141h2v3h-2zM768 197h19v3h-19zM723 65h10v4h-10zM710 66h2v6h-2zM721 72h12v8h-12zM735 70h3v17h-3zM667 67h1v9h-1zM616 143h3v10h-3zM672 142h3v9h-3zM677 138h3v2h-3zM726 154h3v3h-3zM608 190h3v3h-3zM612 190h4v10h-4zM770 200h17v7h-17zM796 211h4v7h-4zM797 222h3v9h-3zM797 249h3v14h-3zM798 296h2v7h-2zM795 319h5v16h-5zM795 338h5v12h-5zM789 347h3v3h-3zM776 368h12v3h-12zM611 200h6v1h-6zM715 256h2v3h-2zM615 295h2v2h-2zM654 323h4v7h-4zM656 328h7v9h-7zM658 339h5v6h-5zM717 319h6v4h-6zM634 391h1v9h-1zM606 415h16v3h-16zM621 411h3v5h-3zM627 410h8v2h-8zM627 415h7v14h-7zM606 424h16v3h-16zM621 427h1v9h-1zM719 429h4v4h-4zM714 440h1v3h-1zM796 412h4v7h-4zM788 419h8v6h-8zM787 425h6v33h-6zM780 469h5v4h-5zM785 473h5v11h-5zM791 467h9v4h-9zM799 497h1v9h-1zM691 496h4v1h-4zM781 539h1v14h-1zM781 539h19v2h-19zM771 551h10v5h-10zM764 554h7v2h-7zM765 556h1v24h-1zM776 556h1v24h-1zM775 587h14v2h-14zM791 591h9v9h-9zM765 589h23v2h-23zM676 609h2v3h-2zM687 621h7v15h-7zM694 626h4v5h-4zM688 645h8v1h-8zM601 656h9v2h-9zM762 677h8v4h-8zM770 681h5v8h-5zM758 685h4v4h-4zM768 690h7v7h-7zM781 690h19v8h-19zM790 705h10v30h-10zM779 732h2v4h-2zM788 735h12v22h-12zM787 757h2v14h-2zM791 600h9v7h-9zM792 607h2v30h-2zM792 622h8v2h-8zM795 656h5v2h-5zM605 718h6v2h-6zM622 765h7v6h-7zM625 771h7v3h-7zM672 765h1v8h-1zM724 766h4v16h-4zM723 783h5v8h-5zM735 798h18v2h-18z"/>
<path fill="#000" d="M0 0h8v5h-8zM70 0h13v4h-13zM191 0h9v4h-9zM175 323h5v9h-5zM88 420h2v2h-2zM35 694h4v3h-4zM30 704h5v5h-5zM200 0h8v3h-8zM240 0h14v7h-14zM339 301h5v2h-5zM345 306h6v17h-6zM388 791h7v4h-7zM384 791h7v9h-7zM425 0h10v5h-10zM497 12h4v7h-4zM541 6h6v5h-6zM441 227h1v7h-1zM556 244h10v7h-10zM567 748h3v3h-3zM459 777h8v1h-8zM723 0h10v6h-10zM723 6h4v11h-4zM795 70h5v22h-5zM782 96h8v4h-8zM712 65h11v7h-11zM723 69h10v3h-10zM792 92h8v4h-8zM793 336h7v2h-7zM657 336h6v3h-6zM717 323h5v3h-5zM621 422h1v5h-1zM796 419h4v6h-4zM786 458h14v9h-14zM784 467h7v6h-7zM788 586h12v5h-12zM793 591h4v5h-4zM762 681h8v9h-8zM790 698h10v7h-10zM781 730h8v5h-8zM621 765h1v8h-1z"/>
<!--BE-->
</svg>
</div>
</body></html>
